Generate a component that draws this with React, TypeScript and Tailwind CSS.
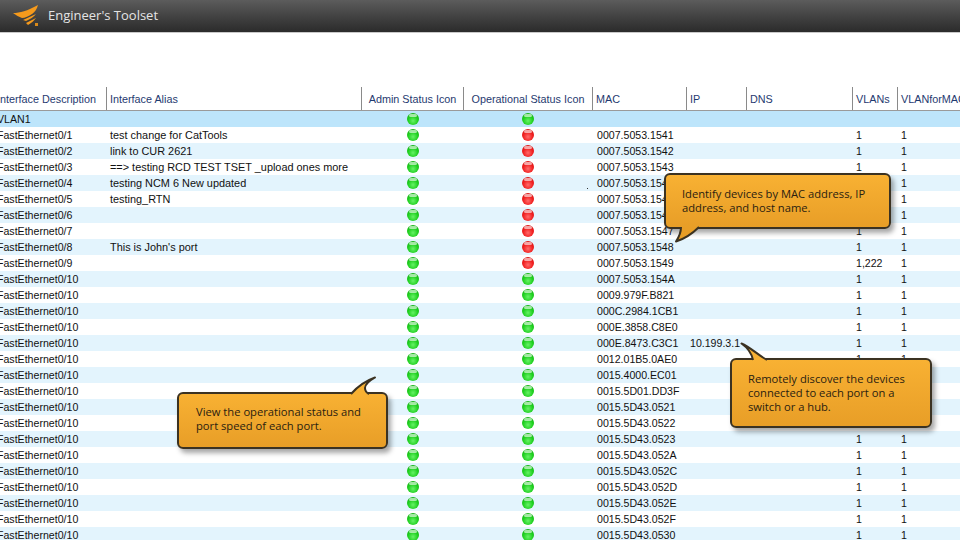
import React from "react";

const grid = "grid grid-cols-[106px_255px_102px_129px_94px_60px_106px_45px_63px]";
const macs = ["0007.5053.1541","0007.5053.1542","0007.5053.1543","0007.5053.1544","0007.5053.1545","0007.5053.1546","0007.5053.1547","0007.5053.1548","0007.5053.1549","0007.5053.154A","0009.979F.B821","000C.2984.1CB1","000E.3858.C8E0","000E.8473.C3C1","0012.01B5.0AE0","0015.4000.EC01","0015.5D01.DD3F","0015.5D43.0521","0015.5D43.0522","0015.5D43.0523","0015.5D43.052A","0015.5D43.052C","0015.5D43.052D","0015.5D43.052E","0015.5D43.052F","0015.5D43.0530"];
const aliases = ["test change for CatTools","link to CUR 2621","==> testing RCD TEST TSET _upload ones more","testing NCM 6 New updated","testing_RTN","","","This is John's port"];
const headers = ["Interface Description","Interface Alias","Admin Status Icon","Operational Status Icon","MAC","IP","DNS","VLANs","VLANforMAC"];

function Dot({ red }: { red?: boolean }) {
  return (
    <span className={`relative block w-3 h-3 rounded-full ml-[1px] ${red ? "bg-[radial-gradient(circle_at_50%_65%,#ff6a6a_0%,#f01f1f_50%,#c41010_100%)]" : "bg-[radial-gradient(circle_at_50%_65%,#66f266_0%,#1fcf1f_50%,#0c9e0c_100%)]"}`}>
      <span className="absolute left-[2px] top-[1px] w-2 h-[3px] rounded-full bg-white/60" />
    </span>
  );
}

function Row({ i, mac, alias, ip, vlan, first, red, label }: { i: number; mac?: string; alias?: string; ip?: string; vlan?: string; first?: boolean; red?: boolean; label: string }) {
  const bg = first ? "bg-[#bde5fb]" : i % 2 === 1 ? "bg-[#e3f4fd]" : "bg-white";
  return (
    <div className={`${grid} h-4 items-center text-[10.6px] leading-4 text-[#111] ${bg}`}>
      <div className="-ml-[3px] whitespace-nowrap">{label}</div>
      <div className="pl-1 whitespace-nowrap text-[10.9px]">{alias}</div>
      <div className="flex justify-center"><Dot /></div>
      <div className="flex justify-center"><Dot red={red} /></div>
      <div className="pl-[5px]">{mac}</div>
      <div className="pl-1">{ip}</div>
      <div />
      <div className="pl-1">{vlan}</div>
      <div className="pl-1">{first ? "" : "1"}</div>
    </div>
  );
}

function Callout({ className, tail, lines }: { className: string; tail: React.ReactNode; lines: string[] }) {
  return (
    <div className={`absolute rounded-[6px] border-2 border-[#3b3222] bg-gradient-to-b from-[#f8b133] to-[#e89e27] shadow-[3px_4px_5px_rgba(0,0,0,0.35)] text-[#2a2110] text-[11.2px] leading-[14px] font-medium font-['Open_Sans',sans-serif] ${className}`}>
      {tail}
      {lines.map((l) => <div key={l} className="whitespace-nowrap">{l}</div>)}
    </div>
  );
}

export default function App() {
  return (
    <div className="relative w-[960px] h-[540px] overflow-hidden bg-white font-['Liberation_Sans',sans-serif]">
      <div className="h-[33px] flex items-center bg-gradient-to-b from-[#5c5c5c] to-[#2b2b2b] border-b border-[#c9c9c9]">
        <svg viewBox="0 0 28 24" className="ml-[12px] w-[28px] h-[24px]" aria-hidden="true">
          <path d="M1 9 C8 9 15 7 26 1 C25 5 23 8 20 10 C17 12 13 14 10 14 C7 13 4 11 1 9Z" fill="#f59a1c" />
          <path d="M11 16 L24 10 C22 13 18 15 14 17Z" fill="#f59a1c" />
          <path d="M14 19 L24 14 C22 17 19 19 16 21Z" fill="#f59a1c" />
          <rect x="23" y="19" width="3" height="3" fill="#d98a1a" />
        </svg>
        <span className="ml-2 text-[13px] text-[#e4e4e4] font-['Open_Sans',sans-serif]">Engineer's Toolset</span>
      </div>
      <div className="pt-[54px]">
        <div className={`${grid} h-6 border-b border-[#9a9a9a] text-[10.8px] text-[#1f3a70]`}>
          {headers.map((h, i) => (
            <div key={h} className={`flex items-center whitespace-nowrap pt-[1px] ${i === 0 ? "-ml-[3px] pr-[3px]" : "border-l border-[#8a8a8a]"} ${i === 2 || i === 3 ? "justify-center" : i === 0 ? "" : "pl-[3px]"}`}>{h}</div>
          ))}
        </div>
        <Row i={0} first label="VLAN1" />
        {macs.map((m, i) => (
          <Row
            key={m}
            i={i}
            mac={m}
            label={i < 9 ? `FastEthernet0/${i + 1}` : "FastEthernet0/10"}
            alias={aliases[i]}
            red={i < 9}
            ip={i === 13 ? "10.199.3.1" : undefined}
            vlan={i === 8 ? "1,222" : "1"}
          />
        ))}
      </div>
      <Callout
        className="left-[664px] top-[173px] w-[227px] h-[56px] pl-[16px] pt-[12px]"
        lines={["Identify devices by MAC address, IP", "address, and host name."]}
        tail={<svg viewBox="0 0 30 18" className="absolute left-[8px] top-[52px] w-[30px] h-[18px] overflow-visible" aria-hidden="true"><path d="M7 0 C7 6 5 10 2 14.5 C10 12 17 8 25 0" fill="#e89e27" stroke="#3b3222" strokeWidth="2" strokeLinejoin="round" /></svg>}
      />
      <Callout
        className="left-[730px] top-[358px] w-[202px] h-[70px] pl-[16px] pt-[12px]"
        lines={["Remotely discover the devices", "connected to each port on a", "switch or a hub."]}
        tail={<svg viewBox="0 0 30 18" className="absolute left-[8px] -top-[18px] w-[30px] h-[18px] overflow-visible" aria-hidden="true"><path d="M13 18 C12 13 8 6 1.5 1.5 C10 5 18 13 27 18" fill="#f8b133" stroke="#3b3222" strokeWidth="2" strokeLinejoin="round" /></svg>}
      />
      <Callout
        className="left-[177px] top-[392px] w-[211px] h-[57px] pl-[17px] pt-[11px]"
        lines={["View the operational status and", "port speed of each port."]}
        tail={<svg viewBox="0 0 30 18" className="absolute left-[171px] -top-[18px] w-[30px] h-[18px] overflow-visible" aria-hidden="true"><path d="M1 18 C8 10 15 5 25 1.5 C19 5 15 8 15 12 C15 15 17 17 19 18" fill="#f8b133" stroke="#3b3222" strokeWidth="2" strokeLinejoin="round" /></svg>}
      />
      <div className="absolute left-[587px] top-[188px] w-px h-px bg-[#333]" />
    </div>
  );
}
